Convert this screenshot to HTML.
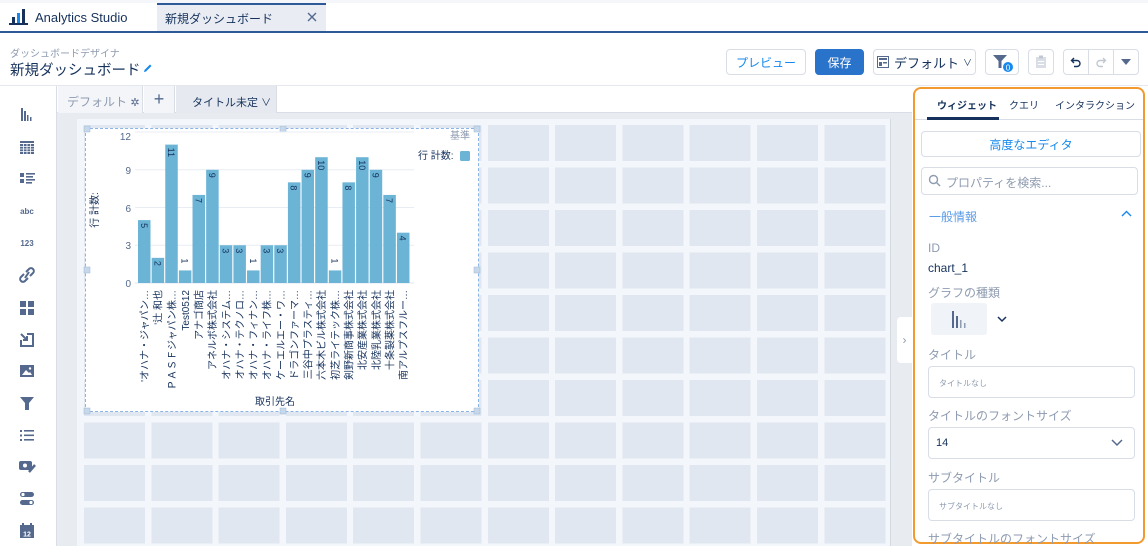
<!DOCTYPE html>
<html><head><meta charset="utf-8">
<style>
*{box-sizing:border-box;margin:0;padding:0}
body{width:1148px;height:546px;overflow:hidden;background:#fff;font-family:"Liberation Sans","Noto Sans CJK JP",sans-serif;position:relative;color:#16325c}
.a{position:absolute}
.btn{position:absolute;border:1px solid #d8dde6;border-radius:4px;background:#fff;display:flex;align-items:center;justify-content:center;font-size:13px}
.lbl{position:absolute;left:928px;font-size:12px;color:#8e9bb0}
.inp{position:absolute;left:928px;width:207px;border:1px solid #d8dde6;border-radius:4px;background:#fff}
</style></head><body>
<div class="a" style="left:0;top:0;width:1148px;height:3px;background:#f4f6f9"></div>
<div class="a" style="left:0;top:31px;width:1148px;height:2px;background:#2d5a96"></div>
<svg class="a" style="left:9px;top:8px" width="20" height="18" viewBox="0 0 20 18"><rect x="0" y="15" width="19" height="2" fill="#16325c"/><rect x="3" y="9" width="3" height="6" fill="#16325c"/><rect x="8" y="5" width="3" height="10" fill="#1589ee"/><rect x="13" y="1" width="3" height="14" fill="#16325c"/></svg>
<div class="a" style="left:35px;top:10px;font-size:13px;color:#16325c">Analytics Studio</div>
<div class="a" style="left:157px;top:3px;width:169px;height:28px;background:#e9edf3;border-top:2px solid #2d5a96"></div>
<div class="a" style="left:165px;top:10px;font-size:12px;color:#16325c">新規ダッシュボード</div>
<svg class="a" style="left:307px;top:12px" width="10" height="10"><path d="M1 1 L9 9 M9 1 L1 9" stroke="#54698d" stroke-width="1.4"/></svg>
<div class="a" style="left:10px;top:45px;font-size:10px;color:#8e9bb0">ダッシュボードデザイナ</div>
<div class="a" style="left:10px;top:59px;font-size:14.5px;color:#16325c">新規ダッシュボード</div>
<svg class="a" style="left:143px;top:63px" width="10" height="10" viewBox="0 0 10 10"><path d="M1 9 L1.5 7 L7 1.5 L8.5 3 L3 8.5 Z" fill="#1589ee"/></svg>
<div class="btn" style="left:726px;top:49px;width:80px;height:26px;color:#1589ee;font-size:12px">プレビュー</div>
<div class="btn" style="left:815px;top:49px;width:49px;height:26px;background:#2a73cb;border-color:#2a73cb;color:#fff;font-size:12px">保存</div>
<div class="btn" style="left:873px;top:49px;width:103px;height:26px;color:#16325c">
<svg width="12" height="12" viewBox="0 0 12 12" style="margin-right:5px"><rect x="0.5" y="0.5" width="11" height="11" fill="none" stroke="#54698d"/><rect x="2" y="2" width="8" height="2" fill="#54698d"/><rect x="2" y="6" width="3" height="4" fill="#54698d"/><rect x="6" y="6" width="4" height="1.5" fill="#54698d"/></svg>デフォルト <span style="font-size:9px;margin-left:4px">∨</span></div>
<div class="btn" style="left:985px;top:49px;width:34px;height:26px">
<svg width="24" height="22" viewBox="0 0 24 22"><path d="M3 4 H17 L11.5 10 V17 H8.5 V10 Z" fill="#54698d"/><circle cx="18" cy="16" r="5" fill="#1589ee"/><text x="18" y="19.5" font-size="8" fill="#fff" text-anchor="middle" font-family="Liberation Sans">0</text></svg></div>
<div class="btn" style="left:1028px;top:49px;width:26px;height:26px"><svg width="12" height="14" viewBox="0 0 12 14"><rect x="1" y="2" width="10" height="11" fill="#d8dde6"/><rect x="4" y="0.5" width="4" height="3" fill="#c2c8d2"/><rect x="3" y="6" width="6" height="1" fill="#fff"/><rect x="3" y="9" width="6" height="1" fill="#fff"/></svg></div>
<div class="btn" style="left:1063px;top:49px;width:76px;height:26px;justify-content:flex-start">
<div style="width:25px;height:24px;display:flex;align-items:center;justify-content:center;border-right:1px solid #d8dde6"><svg width="12" height="12" viewBox="0 0 12 12"><path d="M4 2 L1.5 4.5 L4 7 M1.5 4.5 H7 A3 3 0 0 1 7 10.5 H4" fill="none" stroke="#16325c" stroke-width="1.4"/></svg></div>
<div style="width:25px;height:24px;display:flex;align-items:center;justify-content:center;border-right:1px solid #d8dde6"><svg width="12" height="12" viewBox="0 0 12 12"><path d="M8 2 L10.5 4.5 L8 7 M10.5 4.5 H5 A3 3 0 0 0 5 10.5 H8" fill="none" stroke="#c2c8d2" stroke-width="1.4"/></svg></div>
<div style="width:24px;height:24px;display:flex;align-items:center;justify-content:center"><svg width="10" height="6"><path d="M0 0 H10 L5 6Z" fill="#54698d"/></svg></div></div>
<div class="a" style="left:0;top:85px;width:1148px;height:1px;background:#e4e8ee"></div>
<div class="a" style="left:0;top:86px;width:57px;height:460px;background:#fff;border-right:1px solid #d8dde6"></div>
<svg class="a" style="left:0;top:86px" width="57" height="460" viewBox="0 86 57 460" fill="#54698d">
<g><rect x="21" y="108" width="2" height="13"/><rect x="24" y="111" width="2" height="10"/><rect x="27" y="115" width="1.5" height="6"/><rect x="30" y="117" width="1.5" height="4"/></g>
<g><rect x="20" y="141" width="14" height="2"/><rect x="20" y="144" width="14" height="10" fill="#54698d"/><path d="M20 146.5H34M20 149H34M20 151.5H34M23.5 144V154M27 144V154M30.5 144V154" stroke="#fff" stroke-width="0.8"/></g>
<g><rect x="20" y="173" width="4" height="4"/><rect x="20" y="179" width="4" height="4"/><rect x="26" y="173" width="9" height="1.6"/><rect x="26" y="176" width="7" height="1.6"/><rect x="26" y="179" width="9" height="1.6"/><rect x="26" y="182" width="6" height="1.6"/></g>
<text x="27" y="214" font-size="8" font-weight="bold" text-anchor="middle" font-family="Liberation Sans">abc</text>
<text x="27" y="246" font-size="8" font-weight="bold" text-anchor="middle" font-family="Liberation Sans">123</text>
<g fill="none" stroke="#54698d" stroke-width="2"><path d="M26 272 L29 269 A2.5 2.5 0 0 1 33 273 L30 276"/><path d="M28 278 L25 281 A2.5 2.5 0 0 1 21 277 L24 274"/><path d="M25 278 L29 272"/></g>
<g><rect x="20" y="301" width="6" height="6"/><rect x="28" y="301" width="6" height="6"/><rect x="20" y="309" width="6" height="6"/><rect x="28" y="309" width="6" height="6"/></g>
<g fill="none" stroke="#54698d" stroke-width="2"><path d="M27 334 H33 V346 H21 V340"/><path d="M21 334 L27 340 M27 336 V340 H23"/></g>
<g><rect x="20" y="365" width="14" height="12"/><path d="M22 375 L26 370 L29 373 L30 372 L32 375Z" fill="#fff"/><circle cx="30" cy="368.5" r="1.2" fill="#fff"/></g>
<path d="M20 397 H34 L29 403 V410 H25 V403Z"/>
<g><rect x="20" y="430" width="2" height="2"/><rect x="20" y="434.5" width="2" height="2"/><rect x="20" y="439" width="2" height="2"/><rect x="24" y="430" width="10" height="1.6"/><rect x="24" y="434.5" width="10" height="1.6"/><rect x="24" y="439" width="10" height="1.6"/></g>
<g><rect x="19" y="461" width="13" height="9" rx="2"/><circle cx="25" cy="465.5" r="2" fill="#fff"/><path d="M29 472 L35 465" stroke="#54698d" stroke-width="2.5"/></g>
<g><rect x="20" y="492" width="14" height="5" rx="2.5"/><rect x="20" y="500" width="14" height="5" rx="2.5"/><circle cx="23" cy="494.5" r="1.6" fill="#fff"/><circle cx="31" cy="502.5" r="1.6" fill="#fff"/></g>
<g><rect x="20" y="525" width="14" height="13"/><rect x="22" y="523" width="2" height="3"/><rect x="30" y="523" width="2" height="3"/><text x="27" y="536.5" font-size="7" fill="#fff" text-anchor="middle" font-weight="bold" font-family="Liberation Sans">12</text></g>
</svg>
<div class="a" style="left:57px;top:86px;width:855px;height:27px;background:#fff;border-bottom:1px solid #d8dde6"></div>
<div class="a" style="left:58px;top:86px;width:85px;height:27px;background:#f3f5f8;border-right:1px solid #d8dde6;font-size:12px;color:#8e9bb0;padding:7px 0 0 9px">デフォルト <span style="color:#54698d;font-size:11px">✲</span></div>
<div class="a" style="left:144px;top:86px;width:31px;height:27px;background:#f3f5f8;border-right:1px solid #d8dde6;font-size:18px;color:#54698d;text-align:center;line-height:26px">+</div>
<div class="a" style="left:176px;top:86px;width:101px;height:27px;background:#e6eaf0;border-right:1px solid #d8dde6;font-size:11px;color:#16325c;padding:8px 0 0 16px">タイトル未定 <span style="font-size:10px">∨</span></div>
<div class="a" style="left:57px;top:113px;width:855px;height:433px;background:#e8ecf1"></div>
<div class="a" style="left:77px;top:119px;width:814px;height:427px;background:#f3f6fa;border-right:1px solid #d4dae2"></div>
<div class="a" style="left:84px;top:125px;width:802px;height:421px;background-color:#e0e7f0;background-image:repeating-linear-gradient(90deg,transparent 0 61px,#f3f6fa 61px 67.3px),repeating-linear-gradient(180deg,transparent 0 36px,#f3f6fa 36px 42.5px)"></div>
<div class="a" style="left:897px;top:317px;width:15px;height:46px;background:#fff;border-radius:4px 0 0 4px;color:#8e9bb0;font-size:12px;text-align:center;line-height:46px">›</div>
<div class="a" style="left:85px;top:128px;width:394px;height:284px;background:#fff;border:1px dashed #8ab4e8"></div>
<svg class="a" style="left:0;top:0" width="1148" height="546" font-family="Liberation Sans,Noto Sans CJK JP,sans-serif">
<g fill="#c6d8ea" stroke="#9ab8d6" stroke-width="0.5">
<rect x="84" y="126" width="6" height="6"/><rect x="280" y="126" width="6" height="6"/><rect x="474" y="126" width="6" height="6"/>
<rect x="84" y="267" width="6" height="6"/><rect x="474" y="267" width="6" height="6"/>
<rect x="84" y="408" width="6" height="6"/><rect x="280" y="408" width="6" height="6"/><rect x="474" y="408" width="6" height="6"/></g>
<g stroke="#e8edf3" stroke-width="1"><line x1="135" x2="414" y1="132" y2="132"/><line x1="135" x2="414" y1="169.8" y2="169.8"/><line x1="135" x2="414" y1="207.5" y2="207.5"/><line x1="135" x2="414" y1="245.3" y2="245.3"/><line x1="135" x2="414" y1="283" y2="283" stroke="#dfe5ec"/></g>
<g font-size="10" fill="#54698d" text-anchor="end"><text x="131" y="140">12</text><text x="131" y="174">9</text><text x="131" y="212">6</text><text x="131" y="249">3</text><text x="131" y="287">0</text></g>
<text x="450" y="139" font-size="10" fill="#8e9bb0">基準</text>
<text x="418" y="159" font-size="10" fill="#16325c">行 計数:</text>
<rect x="460" y="151" width="10" height="10" rx="1.5" fill="#6bb4d6"/>
<text transform="translate(98,210) rotate(-90)" font-size="10" fill="#16325c" text-anchor="middle">行 計数:</text>
<text x="275" y="405" font-size="10" fill="#16325c" text-anchor="middle">取引先名</text>
<g id="bars"></g>
</svg>
<div class="a" style="left:913px;top:87px;width:232px;height:457px;border:2px solid #f39a2e;border-radius:8px;background:#fff;overflow:hidden"></div>
<div class="a" style="left:915px;top:119px;width:228px;height:1px;background:#d8dde6"></div>
<div class="a" style="left:937px;top:97px;font-size:10px;font-weight:bold;color:#16325c">ウィジェット</div>
<div class="a" style="left:927px;top:117px;width:72px;height:3px;background:#16325c"></div>
<div class="a" style="left:1009px;top:97px;font-size:10px;color:#16325c">クエリ</div>
<div class="a" style="left:1055px;top:97px;font-size:10px;color:#16325c">インタラクション</div>
<div class="btn" style="left:921px;top:131px;width:220px;height:26px;color:#1589ee;font-size:12px">高度なエディタ</div>
<div class="inp" style="left:921px;top:167px;width:217px;height:28px;font-size:12px;color:#8e9bb0;padding:6px 0 0 24px">プロパティを検索...</div>
<svg class="a" style="left:928px;top:174px" width="13" height="13"><circle cx="5.5" cy="5.5" r="4" fill="none" stroke="#8e9bb0" stroke-width="1.4"/><path d="M8.5 8.5 L12 12" stroke="#8e9bb0" stroke-width="1.4"/></svg>
<div class="a" style="left:929px;top:208px;font-size:12px;color:#5a9be6">一般情報</div>
<svg class="a" style="left:1121px;top:210px" width="11" height="8"><path d="M1 6 L5.5 1.5 L10 6" fill="none" stroke="#1589ee" stroke-width="1.4"/></svg>
<div class="lbl" style="top:241px">ID</div>
<div class="a" style="left:928px;top:261px;font-size:12px;color:#16325c">chart_1</div>
<div class="lbl" style="top:284px">グラフの種類</div>
<div class="a" style="left:931px;top:303px;width:56px;height:32px;background:#f0f3f7;border-radius:3px"></div>
<svg class="a" style="left:950px;top:309px" width="20" height="20"><rect x="2" y="2" width="2" height="17" fill="#54698d"/><rect x="6" y="7" width="2" height="12" fill="#54698d"/><rect x="10" y="11" width="1.5" height="8" fill="#8e9bb0"/><rect x="14" y="14" width="1.5" height="5" fill="#8e9bb0"/></svg>
<svg class="a" style="left:997px;top:316px" width="10" height="7"><path d="M1 1 L5 5 L9 1" fill="none" stroke="#16325c" stroke-width="1.5"/></svg>
<div class="lbl" style="top:346px">タイトル</div>
<div class="inp" style="top:366px;height:32px;font-size:8px;color:#8e9bb0;padding:11px 0 0 10px">タイトルなし</div>
<div class="lbl" style="top:407px">タイトルのフォントサイズ</div>
<div class="inp" style="top:427px;height:32px;font-size:11px;color:#16325c;padding:9px 0 0 7px">14</div>
<svg class="a" style="left:1111px;top:439px" width="12" height="8"><path d="M1 1 L6 6 L11 1" fill="none" stroke="#54698d" stroke-width="1.5"/></svg>
<div class="lbl" style="top:469px">サブタイトル</div>
<div class="inp" style="top:489px;height:32px;font-size:8px;color:#8e9bb0;padding:11px 0 0 10px">サブタイトルなし</div>
<div class="lbl" style="top:530px">サブタイトルのフォントサイズ</div>
<div class="a" style="left:913px;top:544px;width:235px;height:2px;background:#fff"></div>
<script>
var v=[5,2,11,1,7,9,3,3,1,3,3,8,9,10,1,8,10,9,7,4];
var L=["'オハナ・ジャパン…","'辻 和也","ＰＡＳＦジャパン株…","Test0512","アナゴ商店","アネルボ株式会社","オハナ・システム…","オハナ・テクノロ…","オハナ・フィナン…","オハナ・ライフ株…","ケーエルエー・ワ…","ドラゴンファーマ…","三谷中プラスティ…","六本木ビル株式会社","初芝ライテック株…","剣野新商事株式会社","北安産業株式会社","北陸乳業株式会社","十条製薬株式会社","南アルプスフルー…"];
var s="";
for(var i=0;i<20;i++){var x=138+13.63*i,h=v[i]*12.58,t=283-h,cx=x+6.25;
s+='<rect x="'+x+'" y="'+t+'" width="12.5" height="'+h+'" fill="#6bb4d6"/>';
var ty=h>16?t+3:t-12;
s+='<text transform="translate('+(cx-3.5)+','+ty+') rotate(90)" font-size="9" fill="#16325c">'+v[i]+'</text>';
s+='<text transform="translate('+(cx+3.8)+',290) rotate(-90)" font-size="10" fill="#16325c" text-anchor="end">'+L[i]+'</text>';}
document.getElementById("bars").innerHTML=s;
</script>
</body></html>
